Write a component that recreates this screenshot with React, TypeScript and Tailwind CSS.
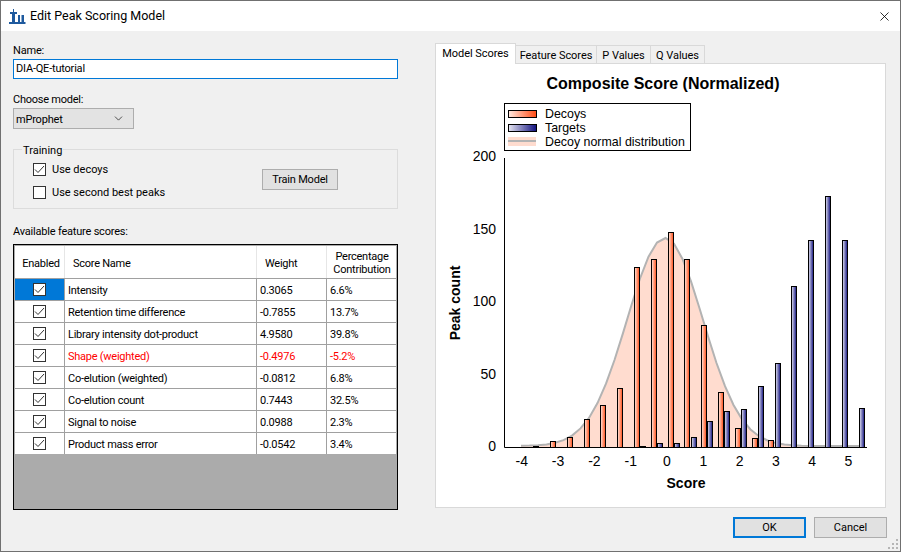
import { ChevronDown, X } from "lucide-react";

const font = { fontFamily: 'Roboto, sans-serif' };

type Row = { name: string; weight: string; pct: string; red?: boolean };

const rows: Row[] = [
  { name: "Intensity", weight: "0.3065", pct: "6.6%" },
  { name: "Retention time difference", weight: "-0.7855", pct: "13.7%" },
  { name: "Library intensity dot-product", weight: "4.9580", pct: "39.8%" },
  { name: "Shape (weighted)", weight: "-0.4976", pct: "-5.2%", red: true },
  { name: "Co-elution (weighted)", weight: "-0.0812", pct: "6.8%" },
  { name: "Co-elution count", weight: "0.7443", pct: "32.5%" },
  { name: "Signal to noise", weight: "0.0988", pct: "2.3%" },
  { name: "Product mass error", weight: "-0.0542", pct: "3.4%" },
];

// [left x, top y] in chart coords
const decoys = [
  [550, 441], [567, 437], [584, 419], [600, 405], [617, 388], [634, 267], [651, 259],
  [668, 232], [684, 259], [701, 325], [718, 392], [735, 428], [752, 438], [768, 440],
];
const targets = [
  [533, 446], [640, 446], [657, 443], [674, 443], [691, 437], [707, 421], [724, 411], [741, 409],
  [758, 386], [775, 363], [791, 286], [808, 240], [825, 196], [842, 240], [859, 408],
];

const yTicks = [
  { label: "200", y: 161 },
  { label: "150", y: 234 },
  { label: "100", y: 306 },
  { label: "50", y: 379 },
  { label: "0", y: 451 },
];
const xTicks = [-4, -3, -2, -1, 0, 1, 2, 3, 4, 5];

function gaussian() {
  const pts: string[] = [];
  for (let x = 521; x <= 866; x += 8.5) {
    const y = 446 - 208 * Math.exp(-((x - 665) * (x - 665)) / (2 * 38 * 38));
    pts.push(`${x},${y.toFixed(1)}`);
  }
  return pts;
}

function CheckBox({ checked }: { checked?: boolean }) {
  return (
    <span className="flex h-[13px] w-[13px] items-center justify-center border border-[#333] bg-white">
      {checked && (
        <svg width="11" height="11" viewBox="0 0 11 11">
          <path d="M1 5.5 L4 8.5 L10 2" fill="none" stroke="#333" strokeWidth="1" />
        </svg>
      )}
    </span>
  );
}

function Chart() {
  const curve = gaussian();
  return (
    <svg width="449" height="443" viewBox="436 64 449 443" className="block">
      <defs>
        <linearGradient id="dec" x1="0" x2="1" y1="0" y2="0">
          <stop offset="0" stopColor="#ffe9e0" />
          <stop offset="1" stopColor="#ff4a12" />
        </linearGradient>
        <linearGradient id="tar" x1="0" x2="1" y1="0" y2="0">
          <stop offset="0" stopColor="#e6e6f2" />
          <stop offset="1" stopColor="#10107f" />
        </linearGradient>
      </defs>
      <text x="663" y="89" textAnchor="middle" fontFamily="Liberation Sans" fontWeight="700" fontSize="16" fill="#000">
        Composite Score (Normalized)
      </text>
      <polygon points={`521,447 ${curve.join(" ")} 866,447`} fill="#ffdccf" />
      <polyline points={curve.join(" ")} fill="none" stroke="#b3b3b3" strokeWidth="2" />
      {decoys.map(([x, y]) => (
        <rect key={x} x={x + 0.5} y={y + 0.5} width="5" height={447 - y} fill="url(#dec)" stroke="#000" />
      ))}
      {targets.map(([x, y]) => (
        <rect key={x} x={x + 0.5} y={y + 0.5} width="5" height={447 - y} fill="url(#tar)" stroke="#000" />
      ))}
      <path d="M504.5 158 V447.5 H867" fill="none" stroke="#000" />
      {yTicks.map((t) => (
        <text key={t.label} x="496" y={t.y} textAnchor="end" fontFamily="Liberation Sans" fontSize="14" fill="#000">
          {t.label}
        </text>
      ))}
      {xTicks.map((t) => (
        <text key={t} x={667 + t * 36.3} y="466" textAnchor="middle" fontFamily="Liberation Sans" fontSize="14" fill="#000">
          {t}
        </text>
      ))}
      <text x="686" y="488" textAnchor="middle" fontFamily="Liberation Sans" fontWeight="700" fontSize="14" fill="#000">
        Score
      </text>
      <text
        transform="translate(460 303) rotate(-90)"
        textAnchor="middle"
        fontFamily="Liberation Sans"
        fontWeight="700"
        fontSize="14"
        fill="#000"
      >
        Peak count
      </text>
      {/* legend */}
      <rect x="504.5" y="103.5" width="186" height="47" fill="#fff" stroke="#000" />
      <rect x="508.5" y="110.5" width="28" height="7" fill="url(#dec)" stroke="#000" />
      <rect x="508.5" y="124.5" width="28" height="7" fill="url(#tar)" stroke="#000" />
      <rect x="508" y="137" width="28" height="9" fill="#ffdccf" />
      <line x1="508" x2="536" y1="141" y2="141" stroke="#b3b3b3" strokeWidth="2" />
      <text x="545" y="118" fontFamily="Liberation Sans" fontSize="12.4" fill="#000">Decoys</text>
      <text x="545" y="132" fontFamily="Liberation Sans" fontSize="12.4" fill="#000">Targets</text>
      <text x="545" y="146" fontFamily="Liberation Sans" fontSize="12.4" fill="#000">Decoy normal distribution</text>
    </svg>
  );
}

export default function App() {
  return (
    <div className="relative flex h-[552px] w-[901px] flex-col overflow-hidden border border-[#707070] bg-[#f0f0f0] text-[11px] leading-4 text-black" style={font}>
      <div className="flex h-[30px] shrink-0 items-center bg-white pl-2 pr-[8px]">
        <svg width="17" height="15" viewBox="0 0 17 15" className="mr-[4px]">
          <path d="M4 0 H5 V3 H8 V5 H6 V13 H3 V5 H1 V3 H4 Z M0 13 H16.5 V15 H0 Z M9 6 H11 V13 H9 Z M12.5 6 H15 V13 H12.5 Z" fill="#1f5a9e" />
        </svg>
        <span className="flex-1 text-[12.5px]">Edit Peak Scoring Model</span>
        <X size={15} strokeWidth={1.3} />
      </div>
      <div className="flex min-h-0 flex-1 gap-[37px] pl-3 pr-[13px] pt-[11px]">
        <div className="flex w-[385px] shrink-0 flex-col">
          <label className="h-4 pt-px tracking-[-0.2px]">Name:</label>
          <div className="mt-[1px] flex h-5 items-center border border-[#0078d7] bg-white px-[2px] tracking-[-0.2px]">DIA-QE-tutorial</div>
          <label className="mt-[12px] h-4 pt-px tracking-[-0.25px]">Choose model:</label>
          <div className="mt-[1px] flex h-[21px] w-[121px] items-center justify-between border border-[#adadad] bg-[#e3e3e3] pl-[2px] pr-2">
            <span className="pt-[2px] tracking-[-0.2px]">mProphet</span>
            <ChevronDown size={13} strokeWidth={1.2} />
          </div>
          <div className="relative mt-[20px] flex h-[60px] items-center justify-between border border-[#dcdcdc] pl-[19px] pr-[59px]">
            <span className="absolute -top-[7px] left-2 bg-[#f0f0f0] px-[1px]">Training</span>
            <div className="mt-[4px] flex flex-col gap-[7px]">
              <div className="flex items-center gap-[6px]"><CheckBox checked />Use decoys</div>
              <div className="flex items-center gap-[6px]"><CheckBox />Use second best peaks</div>
            </div>
            <button className="h-[21px] w-[76px] border border-[#adadad] bg-[#e1e1e1] pt-px tracking-[-0.2px]">Train Model</button>
          </div>
          <div className="mt-[14px] h-4 pt-px tracking-[-0.2px]">Available feature scores:</div>
          <div className="mt-[5px] flex h-[266px] flex-col border border-black bg-[#ababab] p-px pt-px tracking-[-0.25px]">
            <div className="grid h-[32px] grid-cols-[50px_192px_70px_70px] bg-white">
              <div className="flex items-center justify-center border-r border-[#e6e6e6] pl-[3px] pt-[3px]">Enabled</div>
              <div className="flex items-center border-r border-[#e6e6e6] pl-2 pt-[3px]">Score Name</div>
              <div className="flex items-center border-r border-[#e6e6e6] pl-2 pt-[3px]">Weight</div>
              <div className="flex items-center justify-center pt-px text-center leading-[13px]">Percentage Contribution</div>
            </div>
            {rows.map((r, i) => (
              <div key={r.name} className={`grid h-[22px] grid-cols-[50px_192px_70px_70px] border-t border-[#a0a0a0] bg-white ${r.red ? "text-[#ff0000]" : ""}`}>
                <div className={`flex items-center justify-center border-r border-[#a0a0a0] ${i === 0 ? "bg-[#0078d7]" : ""}`}><CheckBox checked /></div>
                <div className="flex items-center border-r border-[#a0a0a0] pl-[3px] pt-[2px]">{r.name}</div>
                <div className="flex items-center border-r border-[#a0a0a0] pl-[3px] pt-[2px]">{r.weight}</div>
                <div className="flex items-center pl-[3px] pt-[2px]">{r.pct}</div>
              </div>
            ))}
          </div>
        </div>
        <div className="mt-px flex w-[451px] shrink-0 flex-col">
          <div className="flex h-[20px] items-end tracking-[-0.05px]">
            <div className="z-10 -mb-px flex h-[21px] w-[81px] items-center justify-center border border-b-0 border-[#d9d9d9] bg-white">Model Scores</div>
            <div className="flex h-[18px] w-[81px] items-center justify-center border border-b-0 border-l-0 border-[#d9d9d9] pt-[2px]">Feature Scores</div>
            <div className="flex h-[18px] w-[54px] items-center justify-center border border-b-0 border-l-0 border-[#d9d9d9] pt-[2px]">P Values</div>
            <div className="flex h-[18px] w-[54px] items-center justify-center border border-b-0 border-l-0 border-[#d9d9d9] pt-[2px]">Q Values</div>
          </div>
          <div className="h-[445px] border border-[#d9d9d9] bg-white">
            <Chart />
          </div>
          <div className="-mr-px mt-[9px] flex justify-end gap-2">
            <button className="h-[21px] w-[73px] border-2 border-[#0078d7] bg-[#e1e1e1] pt-px">OK</button>
            <button className="h-[21px] w-[73px] border border-[#adadad] bg-[#e1e1e1] pt-px">Cancel</button>
          </div>
        </div>
      </div>
      <svg width="11" height="11" viewBox="0 0 11 11" className="absolute bottom-[1px] right-[1px]" fill="#b5b5b5">
        <rect x="8" y="0" width="2" height="2" />
        <rect x="8" y="4" width="2" height="2" />
        <rect x="8" y="8" width="2" height="2" />
        <rect x="4" y="4" width="2" height="2" />
        <rect x="4" y="8" width="2" height="2" />
        <rect x="0" y="8" width="2" height="2" />
      </svg>
    </div>
  );
}
